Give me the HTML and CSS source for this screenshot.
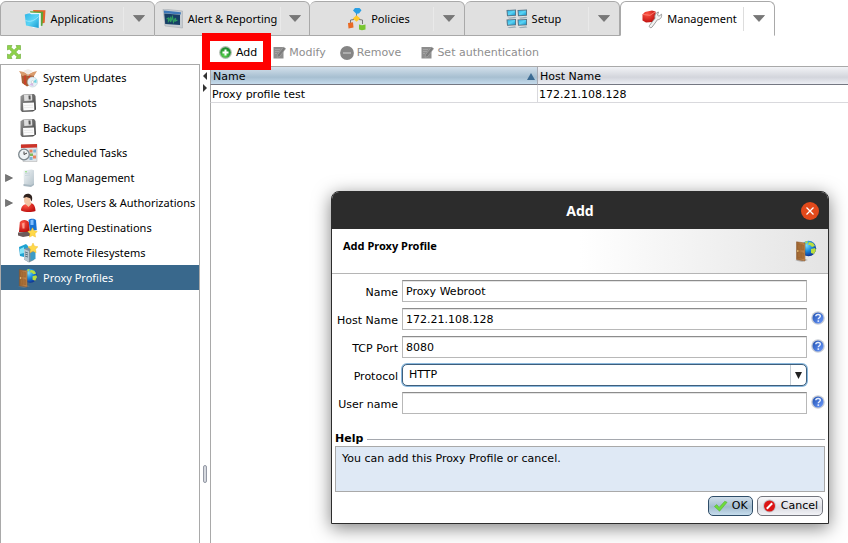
FILE: index.html
```html
<!DOCTYPE html>
<html lang="en">
<head>
<meta charset="utf-8">
<title>Proxy Profiles</title>
<link rel="stylesheet" href="styles.css">
</head>
<body>
<svg class="defs" aria-hidden="true">
  <defs>
    <linearGradient id="cyan" x1="0" y1="0" x2="1" y2="1"><stop offset="0" stop-color="#2fb4e6"/><stop offset=".5" stop-color="#5ad4f5"/><stop offset="1" stop-color="#1598cf"/></linearGradient>
    <linearGradient id="metal" x1="0" y1="0" x2="1" y2="1"><stop offset="0" stop-color="#9a9a9a"/><stop offset="1" stop-color="#3a3a3a"/></linearGradient>
    <linearGradient id="wood" x1="0" y1="0" x2="1" y2="0"><stop offset="0" stop-color="#9a6230"/><stop offset="1" stop-color="#c68b50"/></linearGradient>
    <radialGradient id="globe" cx=".35" cy=".3" r=".8"><stop offset="0" stop-color="#7fe0fb"/><stop offset=".45" stop-color="#1b8fe0"/><stop offset="1" stop-color="#0a1f86"/></radialGradient>
    <radialGradient id="red" cx=".35" cy=".3" r=".8"><stop offset="0" stop-color="#ff5544"/><stop offset="1" stop-color="#b80a0a"/></radialGradient>
    <radialGradient id="green" cx=".4" cy=".75" r=".7"><stop offset="0" stop-color="#5fd851"/><stop offset="1" stop-color="#17862a"/></radialGradient>
    <linearGradient id="blue" x1="0" y1="0" x2="1" y2="1"><stop offset="0" stop-color="#1f4fae"/><stop offset="1" stop-color="#6e9cff"/></linearGradient>
    <linearGradient id="case" x1="0" y1="0" x2="1" y2="1"><stop offset="0" stop-color="#f2f6f8"/><stop offset="1" stop-color="#b3c1c9"/></linearGradient>
    <symbol id="i-door" viewBox="0 0 22 22">
      <path d="M0 20.500l9-2 4 1.500-6 2z" fill="#888" opacity=".5"/>
      <circle cx="13.500" cy="8.500" r="7.700" fill="url(#globe)"/>
      <path d="M14 2l4 1 2 3-3 1-2-2-2 0zM16 9l4-1 1 2-2 4-3-1zM10 2l2-1 1 1-2 2z" fill="#b9dd3e"/>
      <path d="M1.500 1.800l8.500 1.200v18l-8.500-1.500z" fill="url(#wood)" stroke="#8a5526" stroke-width=".5"/>
      <path d="M3 4l2.200.4v5.200L3 9zM6.400 4.600l2.200.4v5.200l-2.200-.4zM3 12l2.200.4V18L3 17.500zM6.400 12.600l2.200.4v5.600l-2.200-.4z" fill="#a97038" stroke="#8a5526" stroke-width=".3"/>
      <circle cx="2.800" cy="11" r=".8" fill="#ffe08a"/>
    </symbol>
    <symbol id="i-floppy" viewBox="0 0 20 20">
      <path d="M2.500 3.200L5 1.500 16 1l1.500 2 .5 13.500-3 2-11 .5-1.500-2z" fill="url(#metal)"/>
      <path d="M6 2l8-.4.300 6L6.300 8z" fill="#dedede"/><path d="M10.500 2.500l2-.1.200 4-2 .1z" fill="#555"/>
      <path d="M5 10l11-.5.400 7.500-11 .5z" fill="#fbfbfb"/>
      <path d="M6 12.500l9-.4M6 14.700l9-.4" stroke="#ddd" stroke-width=".6"/>
    </symbol>
    <symbol id="i-star" viewBox="0 0 10 10"><path d="M5 0l1.500 3.200 3.500.5-2.500 2.500.6 3.600L5 8 1.900 9.800l.6-3.600L0 3.700l3.500-.5z" fill="#ffd94a" stroke="#eeb41c" stroke-width=".4"/></symbol>
    <symbol id="i-edit" viewBox="0 0 13 13">
      <path d="M.5 1h10v11.500H.5z" fill="#8d8d8d"/><path d="M2 3.500h5M2 5.500h4M2 7.500h2" stroke="#a8a8a8" stroke-width=".8"/>
      <path d="M4.500 8.800L10.500 1l2.300 1.600-6 7.800-2.800 1z" fill="#7c7c7c" stroke="#b5b5b5" stroke-width=".5"/>
    </symbol>
    <symbol id="i-help" viewBox="0 0 14 14">
      <circle cx="7" cy="7" r="6.800" fill="#c9cdd5"/><circle cx="7" cy="7" r="5.500" fill="url(#blue)"/>
      <path d="M4.800 5.300c.1-2.600 4.700-2.500 4.500 0C9.200 6.800 7.300 6.700 7.300 8.300" fill="none" stroke="#e6eeff" stroke-width="1.500"/><rect x="6.500" y="9.300" width="1.600" height="1.600" fill="#e6eeff"/>
    </symbol>
    <symbol id="i-down" viewBox="0 0 12 7"><path d="M.5.500h11L6 6.500z" fill="#777" stroke="#5f5f5f" stroke-width=".6"/></symbol>
    <symbol id="i-pc" viewBox="0 0 11 10"><path d="M.5 1l9.500-.5v6.300L1 7.300z" fill="#577384"/><path d="M1.500 1.800l7.600-.4v4.500L1.900 6.300z" fill="url(#cyan)"/><path d="M1.500 8.700l7.500-1 1.500 1.200-7 .9z" fill="#9badb7"/></symbol>
  </defs>
</svg>

<nav class="tabs" aria-label="Sections">
  <div class="tab">
    <a href="#applications"><svg class="tab-icon" viewBox="0 0 22 20"><path d="M9 1l12.500.3-.8 12.500-7 2z" fill="#e6652b"/><path d="M6 2.300l13.200.4-.7 14-8 1z" fill="#5aa53a"/><path d="M4 3.500l12.800.6v14.500l-8 .5z" fill="#e9f7ff"/><path d="M.8 5.500l4.500-1.300 2 1L15 5l-.3 14L2 16.500z" fill="url(#cyan)"/><path d="M1.500 11.500c5 2 9 0 13-4" fill="none" stroke="#a6edff" stroke-width=".8"/></svg>Applications</a>
    <button type="button" aria-label="Applications menu"><svg><use href="#i-down"/></svg></button>
  </div>
  <div class="tab tab-tight">
    <a href="#alerts"><svg class="tab-icon" viewBox="0 0 22 20"><path d="M1 0l19.500 2v17L3 17z" fill="#c7cdd2" stroke="#a7adb2" stroke-width=".6"/><path d="M1.800 1.500l17 1.700v2.300L2 4.300z" fill="#3d78b8"/><path d="M2.200 4.500L18 5.800V16L3.200 15z" fill="#173f66"/><path d="M4.500 10l2-1v3l2-3v4l2-5 1 5 2-4v3l2-1" fill="none" stroke="#2f9b62" stroke-width="1.300"/></svg>Alert &amp; Reporting</a>
    <button type="button" aria-label="Alert &amp; Reporting menu"><svg><use href="#i-down"/></svg></button>
  </div>
  <div class="tab">
    <a href="#policies"><svg class="tab-icon tab-icon-tall" viewBox="0 0 20 24"><path d="M9.500 6v5M7 12.500l-3.500.5v3M12 12.500l3.500.5v4" stroke="#777" fill="none"/><path d="M6 3.500l2-2.500h4.500l2 2.300L12 6.500h-1.500L9.500 8l-.5-1.500z" fill="#2a9fe3"/><path d="M5.800 11.500L9.500 8.200l3.800 3.300-3.800 3.300z" fill="#ffc928"/><path d="M1 16l5-.8.500 5.300-5 1z" fill="#e96a24"/><path d="M12 17.500l3 .8 3.500-.8v5l-3.500.8-3-.8z" fill="#79c630"/></svg>Policies</a>
    <button type="button" aria-label="Policies menu"><svg><use href="#i-down"/></svg></button>
  </div>
  <div class="tab">
    <a href="#setup"><svg class="tab-icon" viewBox="0 0 22 20"><use href="#i-pc" width="11" height="10"/><use href="#i-pc" x="11" width="11" height="10"/><use href="#i-pc" y="9.500" width="11" height="10"/><use href="#i-pc" x="11" y="9.500" width="11" height="10"/></svg>Setup</a>
    <button type="button" aria-label="Setup menu"><svg><use href="#i-down"/></svg></button>
  </div>
  <div class="tab tab-active">
    <a href="#management" aria-current="page"><svg class="tab-icon" viewBox="0 0 22 20"><path d="M1.500 5.500L4 3l7-1.500 3.500 1L15 9l-4 4-6 .5-3.500-2z" fill="url(#red)"/><path d="M2 5.500l7 .8 5-3.300" stroke="#ff8a7c" fill="none" stroke-width=".8"/><path d="M8.500 16.500l5.500-7.300c-.8-3 .8-5.700 3.500-6.200l-1 3.200 1.500 1 2.500-2c.7 3.300-1.500 5.600-4 5.500l-5.500 7.500c-1.500 1.300-3.500-.2-2.500-1.700z" fill="#f2f2f2" stroke="#888" stroke-width=".8"/></svg>Management</a>
    <button type="button" aria-label="Management menu"><svg><use href="#i-down"/></svg></button>
  </div>
</nav>

<div class="workspace">
  <aside class="sidebar">
    <div class="sidebar-tools">
      <button type="button" class="plain" aria-label="Expand"><svg class="expand" viewBox="0 0 14 14"><path d="M.5.500h4.500L4 2.200l3 3 3-3L9 .5h4.500V5L11.800 4l-3 3 3 3 1.700-1v4.500H9l1-1.700-3-3-3 3 1 1.700H.5V9l1.700 1 3-3-3-3L.5 5z" fill="#8fd24a" stroke="#69ab36" stroke-width=".6"/></svg></button>
    </div>
    <ul class="tree">
      <li><a href="#updates"><span class="twist"></span><svg class="ico" viewBox="0 0 20 20"><path d="M3 6l7 1.500L16 6v9l-7 3.500L4 15z" fill="#a85e35"/><path d="M1 3l5 1 4 2.500L15 4l4-1-3 5-6.500-1L4 8z" fill="#d99b6d"/><path d="M5 3l5-2 5 2-5 3.500z" fill="#f0ebe6"/><path d="M7 7.500v9M11.500 8v5" stroke="#d43b26" stroke-width="1.500"/><circle cx="14.500" cy="14" r="5" fill="#e4f1f6" stroke="#b4c5cd" stroke-width=".5"/><path d="M14.500 14l4-3v4z" fill="#70d5e3"/><path d="M14.500 14l-3 3 4 1z" fill="#d7b8e6"/><circle cx="14.500" cy="14" r="1.300" fill="#fff" stroke="#bbb" stroke-width=".5"/></svg>System Updates</a></li>
      <li><a href="#snapshots"><span class="twist"></span><svg class="ico"><use href="#i-floppy"/></svg>Snapshots</a></li>
      <li><a href="#backups"><span class="twist"></span><svg class="ico"><use href="#i-floppy"/></svg>Backups</a></li>
      <li><a href="#tasks"><span class="twist"></span><svg class="ico" viewBox="0 0 20 20"><path d="M3 2l16-.5v17H5z" fill="#dfe4e8" stroke="#aaa" stroke-width=".5"/><path d="M3 1.500L19 1v3.500L3 5z" fill="#cd3329"/><path d="M11.500 6.500h3v3h-3zM15 12.500h3v3h-3z" fill="#e8825f"/><path d="M15.300 6.500h2.700v3h-2.700zM11.500 14h3v3h-3z" fill="#7fb3d6"/><path d="M12 10.500h3v2.500h-3z" fill="#7fba5c"/><circle cx="6" cy="11.500" r="5.300" fill="#eef3f5" stroke="#7c878d" stroke-width="1.300"/><path d="M6 8.500v3l3-1.500" stroke="#444" fill="none"/></svg>Scheduled Tasks</a></li>
      <li><a href="#logs"><span class="twist"><svg viewBox="0 0 8 8"><path d="M.5.500l7 3.500-7 3.500z" fill="#777" stroke="#555" stroke-width=".6"/></svg></span><svg class="ico" viewBox="0 0 20 20"><path d="M5.500 2.500l8-1 2.500.8v14l-3 2-7-.8z" fill="url(#case)"/><path d="M7 5.500l5-.5M7 7.500l5-.5" stroke="#c3d0d7" stroke-width=".8"/><path d="M5.500 16l7.500 1 3-1.500v1.500l-3 2-7.500-1z" fill="#a9b8c1"/><circle cx="8" cy="3.800" r=".8" fill="#7bd663"/></svg>Log Management</a></li>
      <li><a href="#roles"><span class="twist"><svg viewBox="0 0 8 8"><path d="M.5.500l7 3.500-7 3.500z" fill="#777" stroke="#555" stroke-width=".6"/></svg></span><svg class="ico" viewBox="0 0 20 20"><path d="M3 17.500c0-3.500 2-6 5-6.300l5-1.200c3 .7 4.500 4 4.500 8-4 1.500-10 1.500-14.500-.5z" fill="url(#red)"/><path d="M8 9h5l.5 1.800L10.500 14 8 11.500z" fill="#f1c5a4"/><ellipse cx="9.300" cy="7" rx="3.300" ry="4.300" fill="#f3c6a5"/><path d="M5.500 5C5 1.500 9-.2 12 1.200c2.500 1.200 2.700 4.300 1.500 7.300l-1.300-3.300L8.500 4z" fill="#30231f"/></svg>Roles, Users &amp; Authorizations</a></li>
      <li><a href="#alerting"><span class="twist"></span><svg class="ico" viewBox="0 0 20 20"><path d="M10.500 2c2-2 7-1.500 7.500.5l.8 9.500-7 1z" fill="#1872d2"/><path d="M12.500 2l3-.5V7h-3z" fill="#80bfff"/><path d="M1.800 4.500c1-3.500 8-3.500 9 0l1 9.500H1z" fill="url(#red)"/><path d="M4 5.500l2.500-1v6H4.500z" fill="#ff9a8b"/><path d="M0 14.500l12-1 1.500 4-8.500 1.500-5-1.500z" fill="#6b5a5a"/><use href="#i-star" x="9.500" y="9.500" width="10" height="10"/></svg>Alerting Destinations</a></li>
      <li><a href="#remote"><span class="twist"></span><svg class="ico" viewBox="0 0 20 20"><path d="M1 4l7-3 2 2v12l-8-2z" fill="#20a2d2"/><path d="M2 6l4-2v6l-4 1z" fill="#85e6f8"/><path d="M6 6l5-2 5 2v11l-5 2.500-5-3z" fill="#7e919d"/><path d="M6 6l5 2v11l-5-2.500z" fill="#b8c7d0"/><path d="M7 9l3 1M7 11l3 1M7 13l3 1" stroke="#5c7280"/><path d="M12.500 10l5-2v8l-5 2z" fill="#3c9cc6"/><use href="#i-star" x="10" y="0" width="10" height="10"/></svg>Remote Filesystems</a></li>
      <li class="selected"><a href="#proxy"><span class="twist"></span><svg class="ico"><use href="#i-door"/></svg>Proxy Profiles</a></li>
    </ul>
  </aside>

  <div class="splitter">
    <svg class="split-arrows" viewBox="0 0 8 22"><path d="M6 1v8L2 5zM2 13v8l4-4z" fill="#333"/></svg>
    <span class="split-grip"></span>
  </div>

  <main class="content">
    <div class="toolbar">
      <button type="button" class="tool tool-add"><svg viewBox="0 0 13 13"><circle cx="6.500" cy="6.500" r="6.400" fill="#b3bfb3"/><circle cx="6.500" cy="6.500" r="5.200" fill="url(#green)"/><path d="M6.500 3.500v6M3.500 6.500h6" stroke="#fff" stroke-width="2"/></svg>Add</button>
      <button type="button" class="tool tool-modify" disabled><svg><use href="#i-edit"/></svg>Modify</button>
      <button type="button" class="tool tool-remove" disabled><svg viewBox="0 0 14 14"><circle cx="7" cy="7" r="6.900" fill="#858585"/><path d="M3 7h8" stroke="#adadad" stroke-width="2"/></svg>Remove</button>
      <button type="button" class="tool" disabled><svg><use href="#i-edit"/></svg>Set authentication</button>
    </div>
    <table class="grid">
      <thead><tr><th class="sorted">Name<svg class="sort" viewBox="0 0 8 7"><path d="M4 0l4 7H0z" fill="#3b6a92"/></svg></th><th>Host Name</th></tr></thead>
      <tbody><tr><td>Proxy profile test</td><td>172.21.108.128</td></tr></tbody>
    </table>
  </main>
</div>

<div class="highlight"></div>

<section class="dialog" role="dialog" aria-labelledby="dlg-title">
  <header class="titlebar">
    <h1 id="dlg-title">Add</h1>
    <button type="button" class="close" aria-label="Close"><svg viewBox="0 0 18 18"><path d="M5.500 5.500l7 7M12.500 5.500l-7 7" stroke="#fff" stroke-width="1.300"/></svg></button>
  </header>
  <div class="banner"><h2>Add Proxy Profile</h2><svg><use href="#i-door"/></svg></div>
  <form class="form">
    <div class="row"><label for="name">Name</label><input id="name" type="text" value="Proxy Webroot"></div>
    <div class="row"><label for="host">Host Name</label><input id="host" type="text" value="172.21.108.128"><svg class="help"><use href="#i-help"/></svg></div>
    <div class="row"><label for="port">TCP Port</label><input id="port" type="text" value="8080"><svg class="help"><use href="#i-help"/></svg></div>
    <div class="row"><label for="protocol">Protocol</label><div class="select"><select id="protocol"><option>HTTP</option></select><span class="select-arrow"><svg viewBox="0 0 7 7"><path d="M0 0h7L3.500 7z" fill="#222"/></svg></span></div></div>
    <div class="row"><label for="user">User name</label><input id="user" type="text"><svg class="help"><use href="#i-help"/></svg></div>
    <h3 class="help-title">Help</h3>
    <p class="help-box">You can add this Proxy Profile or cancel.</p>
    <div class="actions">
      <button type="button" class="btn btn-ok"><svg viewBox="0 0 16 14"><path d="M1.500 7.500l2.500-2L6.500 8.500 12.500 2l2.500 1-8 9.500z" fill="#6fdc3b" stroke="#4fb02f" stroke-width=".6"/></svg>OK</button>
      <button type="button" class="btn"><svg viewBox="0 0 14 14"><circle cx="7" cy="7" r="6.500" fill="#c4c4c8"/><circle cx="7" cy="7" r="5.500" fill="#dc1414"/><path d="M4.300 9.700l5.400-5.400" stroke="#fff" stroke-width="2"/></svg>Cancel</button>
    </div>
  </form>
</section>
</body>
</html>
```
FILE: styles.css
```css
* { box-sizing: border-box; }

:root {
  --ui: "DejaVu Sans", sans-serif;
  --nav: "Noto Sans", sans-serif;
  --line: #a9a9a9;
}

body {
  display: flex;
  flex-direction: column;
  min-height: 100vh;
  margin: 0;
  overflow: hidden;
  background: #fff;
  color: #000;
  font: 11px/14px var(--ui);
}

button, input, select { font: inherit; color: inherit; }
button { margin: 0; padding: 0; border: 0; background: none; }
a { color: inherit; text-decoration: none; }
h1, h2, h3, p, ul { margin: 0; padding: 0; }
svg { flex: none; }
.defs { position: absolute; width: 0; height: 0; }

/* Tabs */
.tabs { display: flex; padding-top: 1px; font-family: var(--nav); }
.tab {
  display: flex;
  align-items: center;
  width: 155px;
  height: 35px;
  padding-right: 1px;
  border: 1px solid var(--line);
  border-left-width: 0;
  border-radius: 6px 6px 0 0;
  background: #e0e0e0;
}
.tab:first-child { border-left-width: 1px; }
.tab a { display: flex; flex: 1; align-items: center; justify-content: center; gap: 4px; padding-left: 14px; white-space: nowrap; }
.tab-tight a { padding-left: 4px; }
.tab button { display: flex; align-items: center; justify-content: center; width: 30px; height: 24px; border-left: 1px solid #e9e9e9; }
.tab button svg { width: 12px; height: 7px; }
.tab-tight button { width: 28px; }
.tab-active { border-bottom-color: #fff; border-left-width: 1px; background: #fff; }
.tab-active button { border-left-color: #ddd; }
.tab-icon { width: 22px; height: 20px; }
.tab-icon-tall { width: 20px; height: 24px; }

/* Workspace */
.workspace { display: grid; grid-template-columns: 200px 10px 1fr; flex: 1; }
.sidebar { display: flex; flex-direction: column; }
.sidebar-tools { display: flex; height: 28px; align-items: center; padding: 3px 0 0 7px; }
.expand { display: block; width: 14px; height: 14px; }
.tree { flex: 1; border: 1px solid var(--line); border-bottom: 0; list-style: none; font-family: var(--nav); }
.tree a { display: flex; align-items: center; height: 25px; padding-left: 4px; white-space: nowrap; }
.twist { display: flex; width: 13px; }
.twist svg { width: 8px; height: 8px; }
.ico { width: 20px; height: 20px; margin-right: 5px; }
.selected { background: #39688c; color: #fff; }

.splitter { display: flex; flex-direction: column; align-items: center; justify-content: space-between; padding: 35px 0 60px; }
.split-arrows { width: 8px; height: 22px; }
.split-grip { width: 4px; height: 18px; border: 1px solid #9499a5; border-radius: 2px; background: #d6d9df; }

.content { display: flex; flex-direction: column; min-width: 0; }
.toolbar { display: flex; align-items: center; height: 30px; padding: 3px 0 0 9px; }
.tool { display: flex; align-items: center; gap: 3px; white-space: nowrap; }
.tool svg { width: 13px; height: 13px; }
.tool:disabled { color: #8e8e8e; }
.tool-add { gap: 4px; margin-right: 16px; }
.tool-modify { margin-right: 14px; }
.tool-remove { margin-right: 20px; }
.tool-remove svg { width: 14px; height: 14px; }

.grid { width: 100%; border-collapse: separate; border-spacing: 0; table-layout: fixed; border-top: 1px solid var(--line); }
.content::after { content: ""; flex: 1; border-left: 1px solid var(--line); }
.grid th, .grid td { height: 18px; padding: 2px 2px 0; text-align: left; font-weight: normal; }
.grid th { border-bottom: 1px solid #747782; border-right: 1px solid #a8abb5; background: linear-gradient(#f2f3f6, #d3d5dc 60%, #eceef4); }
.grid th.sorted { width: 328px; background: linear-gradient(#d3e0eb, #a7bfd1 60%, #c5dbec); }
.grid th:first-child, .grid td:first-child { border-left: 1px solid var(--line); }
.grid td { padding-left: 1px; border-bottom: 1px solid #d9d9dd; border-right: 1px solid #d9d9dd; }
.grid td:last-child, .grid th:last-child { border-right: 0; }
.sort { float: right; width: 8px; height: 7px; margin-top: 3px; }

.highlight { position: absolute; left: 202px; top: 33px; width: 69px; height: 37px; border: 8px solid #f00; }

/* Dialog */
.dialog {
  position: absolute;
  top: 191px;
  right: 19px;
  width: min(498px, 94vw);
  border: 1px solid #2c2c2c;
  border-radius: 8px 8px 0 0;
  background: #fff;
  box-shadow: 0 4px 18px rgba(0, 0, 0, .5);
}
.titlebar { display: grid; grid-template-columns: 1fr auto 1fr; align-items: center; height: 37px; padding: 0 9px; border-radius: 7px 7px 0 0; background: #2c2c2c; color: #fff; }
.titlebar h1 { grid-column: 2; font: bold 14px/20px var(--nav); }
.close { justify-self: end; width: 18px; height: 18px; border-radius: 50%; background: #e2491b; }
.close svg { display: block; width: 18px; height: 18px; }
.banner { display: flex; justify-content: space-between; height: 45px; padding: 10px 11px; border-bottom: 1px solid #b5b5b5; background: linear-gradient(90deg, #fff 50%, #e4e4e4); }
.banner h2 { font: bold 11px/14px var(--nav); }
.banner svg { width: 22px; height: 24px; }
.form { padding: 6px 3px 7px; }
.row { display: grid; grid-template-columns: 63px 1fr 14px; align-items: center; margin-bottom: 6px; column-gap: 4px; }
.row label { padding-top: 3px; text-align: right; white-space: nowrap; }
.row input { width: 100%; height: 22px; padding: 0 3px; border: 1px solid #b8b8b8; border-top-color: #8c8c8c; background: #fff; box-shadow: inset 0 1px #e4e4e4; outline: 0; }
.help { width: 14px; height: 14px; margin-bottom: 2px; }
.select { position: relative; }
.select select { display: block; width: 100%; height: 22px; padding: 0 22px 0 6px; border: 1px solid #3f5f7c; border-radius: 5px; background: #fff; box-shadow: 0 0 0 1px #8bb9de; appearance: none; outline: 0; }
.select-arrow { position: absolute; top: 1px; right: 1px; bottom: 1px; display: flex; align-items: center; justify-content: center; width: 16px; border-left: 1px solid #c5cdd4; pointer-events: none; }
.select-arrow svg { width: 7px; height: 7px; }
.help-title { display: flex; align-items: center; gap: 4px; margin-top: 18px; font: bold 11px/14px var(--ui); }
.help-title::after { content: ""; flex: 1; height: 1px; background: #a5a8ae; }
.help-box { height: 46px; padding: 5px 6px; border: 1px solid var(--line); background: #dfe9f5; }
.actions { display: flex; justify-content: flex-end; gap: 4px; padding: 4px 2px 0; }
.btn { display: flex; align-items: center; gap: 4px; height: 20px; padding: 0 4px; border: 1px solid #73757d; border-radius: 5px; background: linear-gradient(#f8f8fa, #dcdde3 60%, #f2f3f7); }
.btn svg { width: 15px; height: 14px; }
.btn-ok { border-color: #2f4d68; background: linear-gradient(#cfdeea, #a3bbce 55%, #c6dded); }
```
